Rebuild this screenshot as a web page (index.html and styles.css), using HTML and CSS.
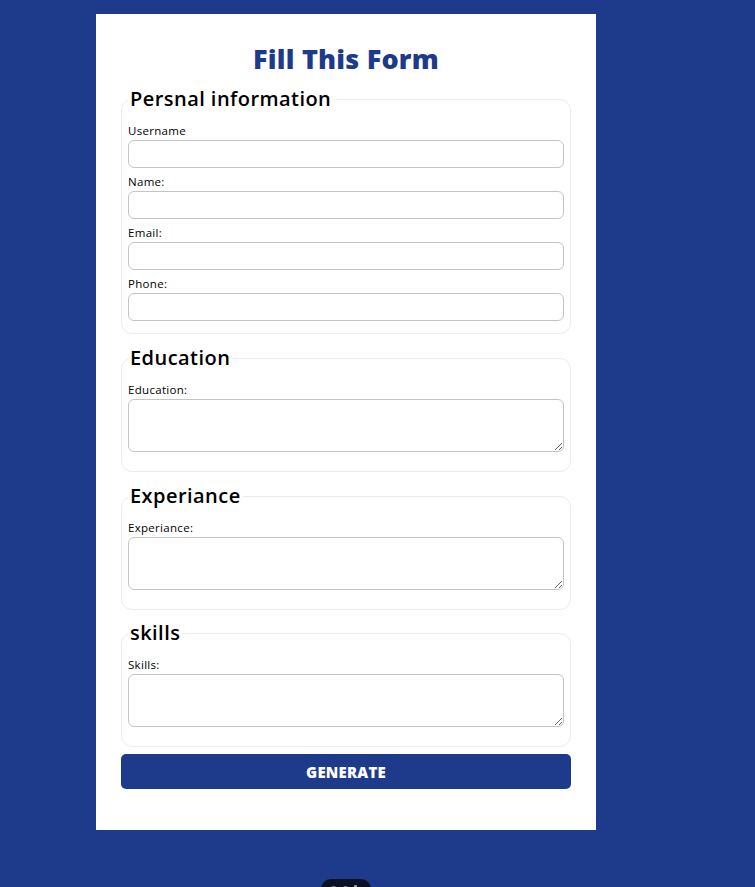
FILE: index.html
```html
<!DOCTYPE html>
<html lang="en">
<head>
<meta charset="utf-8">
<title>Fill This Form</title>
<link rel="stylesheet" href="styles.css">
</head>
<body>
<div class="page">
  <form class="card">
    <h1 class="title">Fill This Form</h1>
    <fieldset class="group">
      <legend class="group-title">Persnal information</legend>
      <label class="field-label" for="username">Username</label>
      <input class="field-input" id="username" type="text">
      <label class="field-label" for="name">Name:</label>
      <input class="field-input" id="name" type="text">
      <label class="field-label" for="email">Email:</label>
      <input class="field-input" id="email" type="email">
      <label class="field-label" for="phone">Phone:</label>
      <input class="field-input" id="phone" type="tel">
    </fieldset>
    <fieldset class="group">
      <legend class="group-title">Education</legend>
      <label class="field-label" for="education">Education:</label>
      <textarea class="field-area" id="education"></textarea>
    </fieldset>
    <fieldset class="group group-tight">
      <legend class="group-title">Experiance</legend>
      <label class="field-label" for="experiance">Experiance:</label>
      <textarea class="field-area" id="experiance"></textarea>
    </fieldset>
    <fieldset class="group">
      <legend class="group-title">skills</legend>
      <label class="field-label" for="skills">Skills:</label>
      <textarea class="field-area" id="skills"></textarea>
    </fieldset>
    <button class="generate" type="button">Generate</button>
  </form>
</div>
<div class="dock">
  <span class="dock-dot"></span>
  <span class="dock-dot"></span>
  <span class="dock-bar"></span>
</div>
</body>
</html>
```
FILE: styles.css
```css
html, body {
  margin: 0;
  padding: 0;
}
body {
  background: #1e3a8a;
  font-family: "Open Sans", "Noto Sans", sans-serif;
  min-height: 887px;
  position: relative;
  overflow: hidden;
}
.page {
  padding: 14px 0 0 96px;
}
.card {
  width: 450px;
  background: #fff;
  padding: 25px 25px 41px;
  display: flex;
  flex-direction: column;
}
.title {
  margin: 0 0 5px;
  text-align: center;
  color: #1e3a8a;
  font-size: 27px;
  line-height: 40px;
  font-weight: 800;
  letter-spacing: 0.2px;
}
.group {
  margin: 0 0 9px;
  padding: 9px 6px 8px;
  border: 1px solid #ececec;
  border-radius: 11px;
  min-width: 0;
}
.group-tight {
  margin-bottom: 8px;
}
.group-title {
  padding: 0 2px;
  font-size: 20px;
  line-height: 30px;
  font-weight: 600;
  letter-spacing: 0.45px;
  color: #000;
}
.field-label {
  display: block;
  font-size: 11.5px;
  line-height: 16px;
  margin-bottom: 1px;
  letter-spacing: 0.3px;
  color: #000;
}
.field-input {
  display: block;
  box-sizing: border-box;
  width: 100%;
  height: 28px;
  margin: 0 0 6px;
  border: 1px solid #c4c4c4;
  border-radius: 6px;
  background: #fff;
  font-family: inherit;
}
.group .field-input:last-child {
  margin-bottom: 4px;
}
.field-area {
  display: block;
  box-sizing: border-box;
  width: 100%;
  height: 53px;
  margin: 0 0 11px;
  border: 1px solid #c4c4c4;
  border-radius: 6px;
  background: #fff;
  font-family: inherit;
}
.generate {
  margin-top: -2px;
  height: 35px;
  border: 0;
  border-radius: 5px;
  background: #1e3a8a;
  color: #fff;
  font-family: inherit;
  font-size: 15px;
  font-weight: 800;
  text-transform: uppercase;
  letter-spacing: 0.2px;
}
.dock {
  position: absolute;
  left: 321px;
  top: 879px;
  width: 50px;
  height: 20px;
  border-radius: 10px;
  background: #0d1222;
  display: flex;
  align-items: center;
  gap: 5px;
  padding-left: 9px;
  box-sizing: border-box;
}
.dock-dot {
  width: 7px;
  height: 7px;
  border: 1.5px solid #9aa0ad;
  border-radius: 50%;
  box-sizing: border-box;
}
.dock-bar {
  width: 3px;
  height: 8px;
  background: #9aa0ad;
  border-radius: 1px;
}
```
